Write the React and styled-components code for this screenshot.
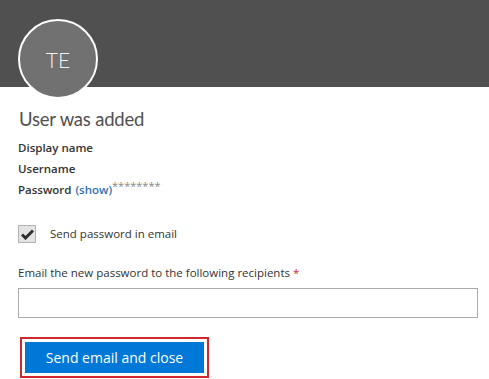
import React from 'react'
import styled, { createGlobalStyle } from 'styled-components'

const GlobalStyle = createGlobalStyle`
	body {
		margin: 0;
		background: #ffffff;
		font-family: 'Open Sans', 'Noto Sans', sans-serif;
	}
`

const Page = styled.div`
	width: 489px;
	height: 379px;
	overflow: hidden;
	background: #ffffff;
`

const Header = styled.div`
	height: 87px;
	box-sizing: border-box;
	padding: 19px 0 0 18px;
	background-color: #505050;
	display: flex;
	align-items: flex-start;
`

const Avatar = styled.div`
	width: 76px;
	height: 76px;
	flex: none;
	border-radius: 50%;
	border: 2px solid #ffffff;
	background-color: #717171;
	color: #f2f2f2;
	font-family: 'Lato', sans-serif;
	font-size: 21px;
	font-weight: 300;
	display: flex;
	align-items: center;
	justify-content: center;
`

const Body = styled.div`
	padding: 20px 11px 0 18px;
`

const Title = styled.h1`
	margin: 0 0 6px;
	padding-left: 1px;
	font-family: 'Lato', sans-serif;
	font-size: 18.5px;
	font-weight: 400;
	letter-spacing: -0.2px;
	color: #505050;
	line-height: 24px;
`

const InfoRow = styled.div`
	font-size: 11.5px;
	font-weight: 600;
	color: #333333;
	line-height: 21px;
`

const ShowLink = styled.a`
	color: #2f72b0;
	font-weight: 600;
	text-decoration: none;
	margin-left: 4px;
`

const Stars = styled.span`
	color: #888888;
	font-weight: 400;
	font-size: 11px;
	line-height: 0;
	vertical-align: 4px;
`

const CheckRow = styled.label`
	display: flex;
	align-items: center;
	gap: 14px;
	margin-top: 24px;
	font-size: 11.5px;
	color: #333333;
	line-height: 20px;
`

const Box = styled.span`
	width: 18px;
	height: 18px;
	box-sizing: border-box;
	border: 1px solid #b3b3b3;
	background: #e3e3e3;
	display: flex;
	align-items: center;
	justify-content: center;
`

const FieldLabel = styled.div`
	margin-top: 21px;
	font-size: 11.5px;
	color: #333333;
	line-height: 16px;
`

const Required = styled.span`
	color: #c4262e;
	margin-left: 3px;
`

const TextInput = styled.input`
	display: block;
	box-sizing: border-box;
	width: 460px;
	height: 30px;
	margin-top: 7px;
	border: 1px solid #ababab;
	outline: none;
`

const Highlight = styled.div`
	display: inline-block;
	margin: 19px 0 0 2px;
	padding: 3px;
	border: 2px solid #d0262d;
`

const PrimaryButton = styled.button`
	width: 179px;
	height: 31px;
	border: none;
	background-color: #0078d7;
	color: #ffffff;
	font-family: inherit;
	font-size: 14px;
	padding: 0;
	display: block;
`

export default function App() {
	return (
		<Page>
			<GlobalStyle />
			<Header>
				<Avatar>TE</Avatar>
			</Header>
			<Body>
				<Title>User was added</Title>
				<InfoRow>Display name</InfoRow>
				<InfoRow>Username</InfoRow>
				<InfoRow>
					Password<ShowLink>(show)</ShowLink>
					<Stars>********</Stars>
				</InfoRow>
				<CheckRow>
					<Box>
						<svg width="13" height="11" viewBox="0 0 13 11">
							<path d="M1 5.5 L4.5 9 L12 1.5" fill="none" stroke="#2e2e2e" strokeWidth="3" />
						</svg>
					</Box>
					Send password in email
				</CheckRow>
				<FieldLabel>
					Email the new password to the following recipients<Required>*</Required>
				</FieldLabel>
				<TextInput />
				<Highlight>
					<PrimaryButton>Send email and close</PrimaryButton>
				</Highlight>
			</Body>
		</Page>
	)
}
